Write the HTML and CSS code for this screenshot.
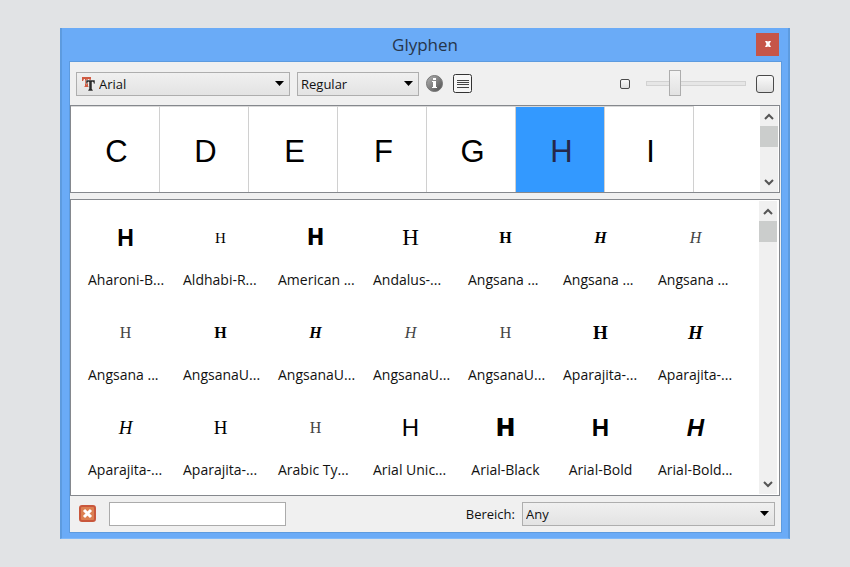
FILE: index.html
```
<!DOCTYPE html>
<html lang="de">
<head>
	<meta charset="utf-8">
	<title>Glyphen</title>
	<link rel="stylesheet" href="styles.css">
</head>
<body>
	<div class="window">
		<header class="titlebar">
			<h1>Glyphen</h1>
			<button type="button" class="close" aria-label="Schließen">
				<svg width="8" height="8" viewBox="0 0 8 8"><path d="M1 1h2.500l.5 1.500L4.500 1H7L5.500 4 7 7H4.500L4 5.500 3.500 7H1l1.500-3z" fill="#fff"/></svg>
			</button>
		</header>

		<main class="client">
			<div class="toolbar">
				<div class="drop family">
					<svg class="tt" width="14" height="14" viewBox="0 0 14 14">
						<path d="M0 0h9v4H8L7 2H6v7l1 1H2l1-1V2H2L1 4H0z" fill="#cf5a42"/>
						<path d="M4 3h9v4h-1l-1-2h-1v7l1 1v1H6v-1l1-1V5H6L5 7H4z" fill="#2a2a2a" stroke="#f0f0f0" stroke-width=".5"/>
					</svg>
					<select aria-label="Schrift"><option>Arial</option></select>
					<svg class="arrow" width="9" height="5" viewBox="0 0 9 5"><path d="M0 0h9L4.500 5z"/></svg>
				</div>
				<div class="drop style">
					<select aria-label="Schnitt"><option>Regular</option></select>
					<svg class="arrow" width="9" height="5" viewBox="0 0 9 5"><path d="M0 0h9L4.500 5z"/></svg>
				</div>
				<button type="button" class="icon" aria-label="Info">
					<svg width="17" height="17" viewBox="0 0 17 17">
						<defs><linearGradient id="ball" x2="1" y2="1"><stop offset="0" stop-color="#b5b5b5"/><stop offset="1" stop-color="#4c4c4c"/></linearGradient></defs>
						<circle cx="8.500" cy="8.500" r="8" fill="url(#ball)" stroke="#777"/>
						<path d="M7 3h3v2H7zM6 6h4v6h1v1H6v-1h1V7H6z" fill="#fff"/>
					</svg>
				</button>
				<button type="button" class="icon" aria-label="Liste">
					<svg width="19" height="19" viewBox="0 0 19 19">
						<rect x=".5" y=".5" width="18" height="18" rx="2" fill="#f6f6f6" stroke="#333"/>
						<path d="M4 6.500h12M4 8.500h12M4 10.500h12M4 13.500h12" stroke="#444"/>
					</svg>
				</button>
				<div class="zoom">
					<span class="box small"></span>
					<input type="range" min="0" max="100" value="25" aria-label="Größe">
					<span class="box large"></span>
				</div>
			</div>

			<section class="pane strip">
				<div class="letters">
					<button type="button">C</button>
					<button type="button">D</button>
					<button type="button">E</button>
					<button type="button">F</button>
					<button type="button">G</button>
					<button type="button" class="selected">H</button>
					<button type="button">I</button>
				</div>
				<div class="scrollbar">
					<button type="button" aria-label="Nach oben"><svg width="10" height="7" viewBox="0 0 10 7"><path d="M1 6l4-4 4 4"/></svg></button>
					<div class="thumb"></div>
					<button type="button" aria-label="Nach unten"><svg width="10" height="7" viewBox="0 0 10 7"><path d="M1 1l4 4 4-4"/></svg></button>
				</div>
			</section>

			<section class="pane fonts">
				<ul class="grid">
					<li><b class="sans wide bold">H</b><span>Aharoni-B...</span></li>
					<li><b class="serif s14">H</b><span>Aldhabi-R...</span></li>
					<li><b class="narrow">H</b><span>American ...</span></li>
					<li><b class="serif s22">H</b><span>Andalus-...</span></li>
					<li><b class="serif s16 bold">H</b><span>Angsana ...</span></li>
					<li><b class="serif s16 bold italic">H</b><span>Angsana ...</span></li>
					<li><b class="serif s16 light italic">H</b><span>Angsana ...</span></li>

					<li><b class="serif s16 light">H</b><span>Angsana ...</span></li>
					<li><b class="serif s16 bold">H</b><span>AngsanaU...</span></li>
					<li><b class="serif s16 bold italic">H</b><span>AngsanaU...</span></li>
					<li><b class="serif s16 light italic">H</b><span>AngsanaU...</span></li>
					<li><b class="serif s16 light">H</b><span>AngsanaU...</span></li>
					<li><b class="serif s19 bold">H</b><span>Aparajita-...</span></li>
					<li><b class="serif s19 bold italic">H</b><span>Aparajita-...</span></li>

					<li><b class="serif s19 italic">H</b><span>Aparajita-...</span></li>
					<li><b class="serif s19">H</b><span>Aparajita-...</span></li>
					<li><b class="serif s16 light">H</b><span>Arabic Ty...</span></li>
					<li><b class="sans">H</b><span>Arial Unic...</span></li>
					<li><b class="sans black">H</b><span class="full">Arial-Black</span></li>
					<li><b class="sans bold">H</b><span class="full">Arial-Bold</span></li>
					<li><b class="sans bold italic">H</b><span>Arial-Bold...</span></li>
				</ul>
				<div class="scrollbar">
					<button type="button" aria-label="Nach oben"><svg width="10" height="7" viewBox="0 0 10 7"><path d="M1 6l4-4 4 4"/></svg></button>
					<div class="thumb"></div>
					<button type="button" aria-label="Nach unten"><svg width="10" height="7" viewBox="0 0 10 7"><path d="M1 1l4 4 4-4"/></svg></button>
				</div>
			</section>

			<footer class="filter">
				<button type="button" class="icon" aria-label="Suche löschen">
					<svg width="17" height="17" viewBox="0 0 17 17">
						<rect x="1" y="1" width="15" height="15" rx="2" fill="#dc8052" stroke="#c9573c" stroke-width="2"/>
						<path d="M5 5l7 7M12 5l-7 7" stroke="#fff" stroke-width="3"/>
					</svg>
				</button>
				<input type="text" aria-label="Suche">
				<label for="range">Bereich:</label>
				<div class="drop range">
					<select id="range"><option>Any</option></select>
					<svg class="arrow" width="9" height="5" viewBox="0 0 9 5"><path d="M0 0h9L4.500 5z"/></svg>
				</div>
			</footer>
		</main>
	</div>
</body>
</html>
```
FILE: styles.css
```
* {
	box-sizing: border-box;
}
body {
	margin: 0;
	padding: 28px 60px;
	background: #e1e3e5;
	color: #111;
	font-family: "Open Sans", "Noto Sans", sans-serif;
	font-size: 13px;
}
button {
	display: flex;
	align-items: center;
	justify-content: center;
	margin: 0;
	padding: 0;
	border: 0;
	background: none;
	color: inherit;
	font: inherit;
}
svg {
	display: block;
}

/* window frame */
.window {
	padding: 0 7px 6px 8px;
	background: #6aabf7;
	border: solid #5d9bdf;
	border-width: 0 2px 1px;
	border-bottom-color: #7fb9fa;
}
.titlebar {
	display: grid;
	grid-template-columns: 24px 1fr 24px;
	align-items: center;
	height: 34px;
	padding: 0 1px 2px 0;
}
.titlebar h1 {
	grid-column: 2;
	margin: 0;
	color: #26354a;
	font-size: 17px;
	font-weight: 400;
	text-align: center;
}
.close {
	width: 23px;
	height: 23px;
	background: #c65548;
}
.client {
	padding-right: 1px;
	background: #f0f0f0;
	box-shadow: 0 0 0 1px #5d9bdf;
}

/* toolbar */
.toolbar {
	display: flex;
	align-items: center;
	gap: 7px;
	height: 43px;
	padding: 0 6px;
}
.drop {
	position: relative;
}
.drop select {
	appearance: none;
	display: block;
	width: 100%;
	height: 24px;
	padding: 0 20px 0 3px;
	border: 1px solid #aeaeae;
	border-radius: 0;
	background: linear-gradient(#f0f0f0, #e3e3e3);
	color: #111;
	font: inherit;
}
.drop .arrow {
	position: absolute;
	top: 9px;
	right: 6px;
	pointer-events: none;
}
.family {
	width: 214px;
}
.drop.family select {
	padding-left: 22px;
}
.tt {
	position: absolute;
	top: 5px;
	left: 6px;
}
.style {
	width: 122px;
}
.toolbar .icon + .icon {
	margin-left: 3px;
}
.zoom {
	display: flex;
	align-items: center;
	margin-left: auto;
}
.box {
	border: 1px solid #4a4a4a;
	border-radius: 3px;
	background: linear-gradient(#fafafa, #dedede);
}
.small {
	width: 10px;
	height: 10px;
	border-radius: 2px;
}
.large {
	width: 18px;
	height: 18px;
}
.zoom input {
	appearance: none;
	width: 100px;
	height: 26px;
	margin: 0 10px 0 16px;
	background: none;
}
.zoom input::-webkit-slider-runnable-track {
	height: 5px;
	border: 1px solid #d2d2d2;
	background: #e6e6e6;
}
.zoom input::-webkit-slider-thumb {
	appearance: none;
	width: 12px;
	height: 26px;
	margin-top: -12px;
	border: 1px solid #adadad;
	background: linear-gradient(#f4f4f4, #e2e2e2);
}

/* panes */
.pane {
	display: flex;
	border: 1px solid #85888d;
	background: #fff;
}
.strip {
	height: 88px;
	margin-bottom: 6px;
}
.letters {
	display: flex;
	flex: 1;
	overflow: hidden;
}
.letters button {
	flex: none;
	width: 89px;
	padding: 4px 0 0 3px;
	border-top: 1px solid #d9d9d9;
	border-right: 1px solid #d0d0d0;
	color: #000;
	font-family: "Liberation Sans", Arial, sans-serif;
	font-size: 31px;
}
.letters .selected {
	background: #3399ff;
	color: #25284a;
}
.scrollbar {
	display: flex;
	flex-direction: column;
	flex: none;
	width: 18px;
	margin-right: 1px;
	background: #f0f0f0;
}
.scrollbar svg {
	fill: none;
	stroke: #555;
	stroke-width: 2;
}
.scrollbar button {
	height: 20px;
}
.scrollbar button:last-child {
	margin-top: auto;
}
.thumb {
	height: 21px;
	background: #cbcdcc;
}
.fonts {
	min-height: 297px;
}
.fonts .scrollbar {
	margin: 1px 2px 1px 0;
}
.grid {
	display: grid;
	flex: 1;
	grid-template-columns: repeat(auto-fill, 95px);
	grid-auto-rows: 95px;
	align-content: start;
	margin: 0;
	padding: 3px 0 0 7px;
	list-style: none;
	font-size: 14px;
}
.grid li {
	display: flex;
	flex-direction: column;
	padding: 15px 0 0 10px;
}
.grid b {
	width: 75px;
	height: 40px;
	color: #000;
	font-weight: 400;
	line-height: 40px;
	text-align: center;
}
.grid span {
	width: 75px;
	height: 20px;
	margin-top: 12px;
	line-height: 20px;
	white-space: nowrap;
}
.grid .full {
	text-align: center;
}
.grid .serif {
	font-family: "Liberation Serif", "Times New Roman", serif;
}
.grid .sans {
	font-family: "Liberation Sans", Arial, sans-serif;
	font-size: 24px;
}
.grid .wide {
	font-size: 23px;
}
.grid .narrow {
	font-family: "Liberation Sans Narrow", "Arial Narrow", Roboto, sans-serif;
	font-size: 23px;
	font-weight: 900;
}
.grid .s14 { font-size: 15px; }
.grid .s16 { font-size: 16px; }
.grid .s19 { font-size: 19px; }
.grid .s22 { font-size: 23px; }
.grid .light {
	color: #444;
}
.grid .bold {
	font-weight: 700;
}
.grid .italic {
	font-style: italic;
}
.grid .black {
	font-family: Inter, sans-serif;
	font-weight: 900;
}

/* bottom row */
.filter {
	display: flex;
	align-items: center;
	height: 36px;
	padding: 0 5px 1px 9px;
}
.filter input {
	width: 177px;
	height: 24px;
	margin-left: 13px;
	border: 1px solid #ababab;
	background: #fff;
	font: inherit;
}
.filter label {
	margin-left: auto;
	margin-right: 7px;
}
.range {
	width: 253px;
}
```
